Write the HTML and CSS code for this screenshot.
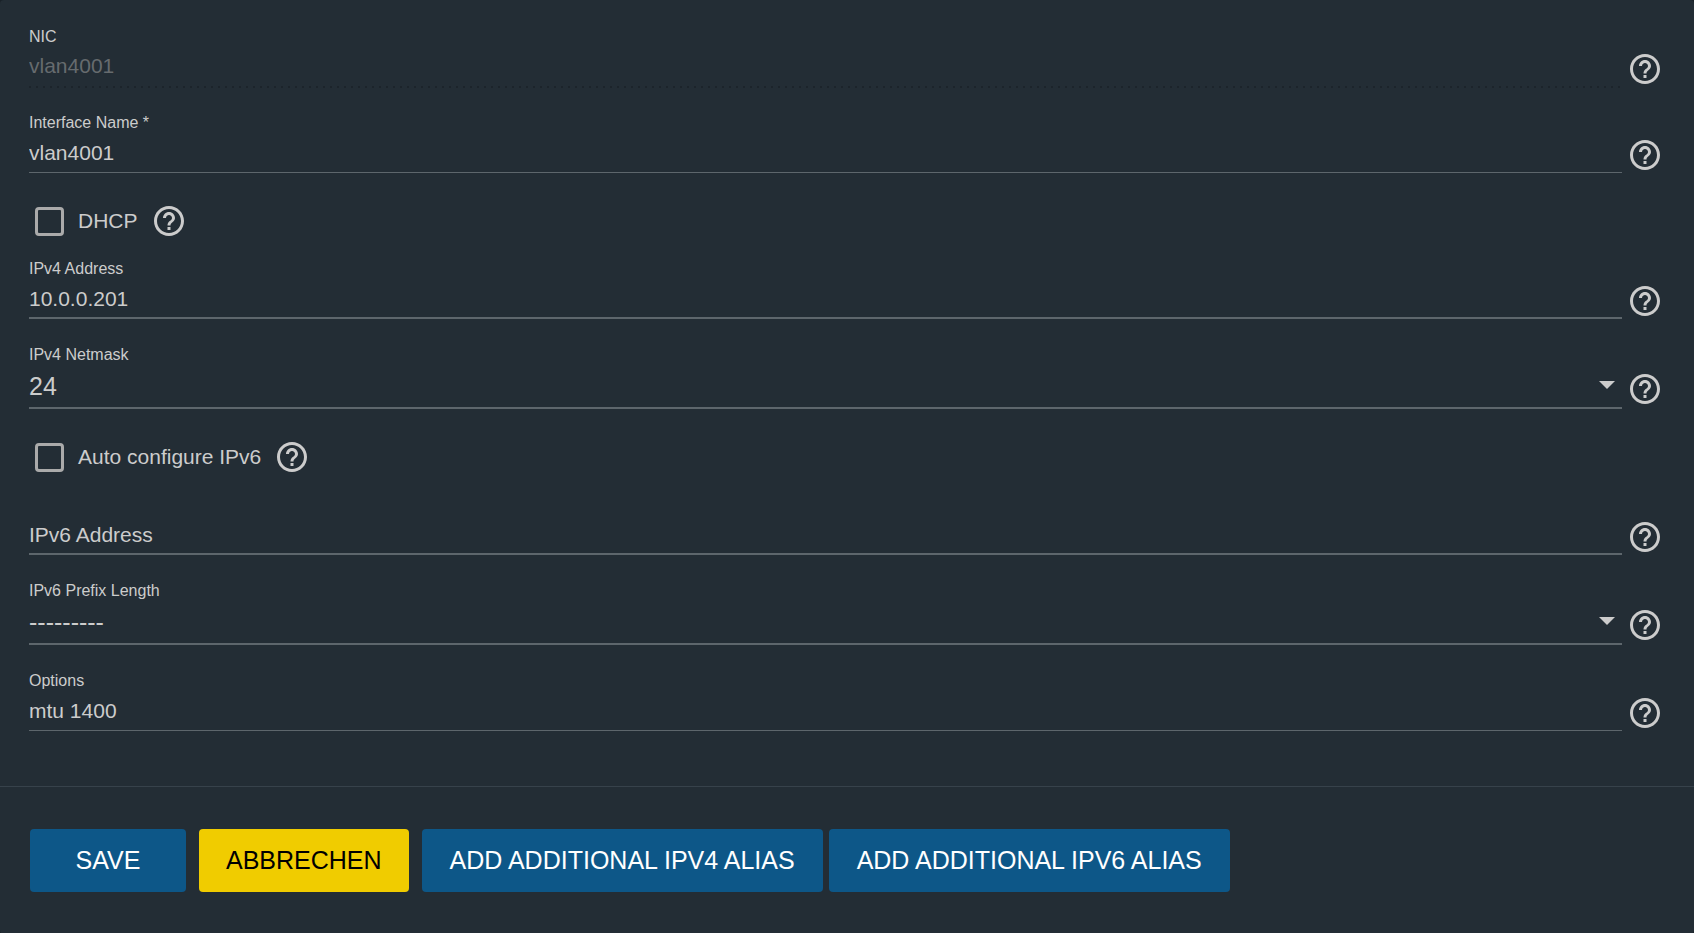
FILE: index.html
```html
<!DOCTYPE html>
<html lang="en">
<head>
    <meta charset="UTF-8">
    <meta name="viewport" content="width=device-width, initial-scale=1.0">
    <title>Interface</title>
    <link rel="stylesheet" href="styles.css">
</head>
<body>
    <!-- help icon, reused by every field -->
    <svg class="sprite" aria-hidden="true">
        <symbol id="help" viewBox="0 0 24 24">
            <path d="M11 18h2v-2h-2v2zm1-16C6.48 2 2 6.48 2 12s4.480 10 10 10 10-4.480 10-10S17.520 2 12 2zm0 18c-4.410 0-8-3.590-8-8s3.590-8 8-8 8 3.590 8 8-3.590 8-8 8zm0-14c-2.210 0-4 1.790-4 4h2c0-1.100.9-2 2-2s2 .9 2 2c0 2-3 1.750-3 5h2c0-2.250 3-2.500 3-5 0-2.210-1.790-4-4-4z"/>
        </symbol>
    </svg>

    <form class="card">
        <div class="fields">
            <div class="row">
                <div class="field">
                    <label for="nic">NIC</label>
                    <input type="text" id="nic" value="vlan4001" disabled>
                </div>
                <button type="button" class="help" aria-label="Help"><svg><use href="#help"/></svg></button>
            </div>

            <div class="row">
                <div class="field">
                    <label for="name">Interface Name *</label>
                    <input type="text" id="name" class="thin" value="vlan4001">
                </div>
                <button type="button" class="help" aria-label="Help"><svg><use href="#help"/></svg></button>
            </div>

            <div class="check-row">
                <input type="checkbox" id="dhcp">
                <label for="dhcp">DHCP</label>
                <button type="button" class="help" aria-label="Help"><svg><use href="#help"/></svg></button>
            </div>

            <div class="row">
                <div class="field">
                    <label for="ipv4">IPv4 Address</label>
                    <input type="text" id="ipv4" value="10.0.0.201">
                </div>
                <button type="button" class="help" aria-label="Help"><svg><use href="#help"/></svg></button>
            </div>

            <div class="row select-row">
                <div class="field">
                    <label for="netmask">IPv4 Netmask</label>
                    <div class="select">
                        <select id="netmask">
                            <option>24</option>
                        </select>
                    </div>
                </div>
                <button type="button" class="help" aria-label="Help"><svg><use href="#help"/></svg></button>
            </div>

            <div class="check-row">
                <input type="checkbox" id="ipv6auto">
                <label for="ipv6auto">Auto configure IPv6</label>
                <button type="button" class="help" aria-label="Help"><svg><use href="#help"/></svg></button>
            </div>

            <div class="row">
                <div class="field no-label">
                    <input type="text" id="ipv6" placeholder="IPv6 Address" aria-label="IPv6 Address">
                </div>
                <button type="button" class="help" aria-label="Help"><svg><use href="#help"/></svg></button>
            </div>

            <div class="row select-row">
                <div class="field">
                    <label for="prefix">IPv6 Prefix Length</label>
                    <div class="select">
                        <select id="prefix">
                            <option>---------</option>
                        </select>
                    </div>
                </div>
                <button type="button" class="help" aria-label="Help"><svg><use href="#help"/></svg></button>
            </div>

            <div class="row">
                <div class="field">
                    <label for="options">Options</label>
                    <input type="text" id="options" class="thin" value="mtu 1400">
                </div>
                <button type="button" class="help" aria-label="Help"><svg><use href="#help"/></svg></button>
            </div>
        </div>

        <div class="actions">
            <button type="submit" class="btn">SAVE</button>
            <button type="button" class="btn btn-cancel">ABBRECHEN</button>
            <div class="alias-buttons">
                <button type="button" class="btn">ADD ADDITIONAL IPV4 ALIAS</button>
                <button type="button" class="btn">ADD ADDITIONAL IPV6 ALIAS</button>
            </div>
        </div>
    </form>
</body>
</html>
```
FILE: styles.css
```css
* {
    box-sizing: border-box;
}

body {
    margin: 0;
    background-color: #192128;
    color: #cccccc;
    font-family: "Liberation Sans", Arial, sans-serif;
    font-size: 21px;
}

input, select, button {
    font-family: inherit;
    color: inherit;
}

.sprite {
    display: none;
}

.card {
    min-height: 100vh;
    background-color: #232d35;
    border-radius: 4px;
}

.fields {
    padding: 28px 31px 28px 29px;
}

.row {
    display: flex;
    align-items: flex-end;
    gap: 5px;
    margin-bottom: 27px;
}

.field {
    flex: 1;
}

.field label {
    display: block;
    font-size: 16px;
    line-height: 18px;
}

.no-label {
    padding-top: 18px;
}

input[type="text"] {
    display: block;
    width: 100%;
    height: 41px;
    padding: 2px 0 0;
    border: none;
    border-bottom: 2px solid #5d666c;
    background: none;
    font-size: 21px;
    outline: none;
}

input[type="text"].thin {
    border-bottom-width: 1px;
}

input[type="text"]::placeholder {
    color: #cccccc;
    opacity: 1;
}

/* dotted underline for the locked field */
input[type="text"]:disabled {
    height: 42px;
    margin-bottom: -1px;
    padding: 0 0 2px;
    border-bottom: none;
    color: #666b6e;
    background: linear-gradient(to right, #1c242b 2px, transparent 2px) left bottom / 7px 2px repeat-x;
}

.select {
    position: relative;
}

.select::after {
    content: "";
    position: absolute;
    top: 17px;
    right: 7px;
    border: 8px solid transparent;
    border-top-color: #cccccc;
    border-bottom: none;
    pointer-events: none;
}

select {
    display: block;
    width: 100%;
    height: 45px;
    padding: 0;
    border: none;
    border-bottom: 2px solid #5d666c;
    border-radius: 0;
    background: none;
    font-size: 25px;
    appearance: none;
    outline: none;
}

select option {
    background-color: #232d35;
}

.help {
    width: 36px;
    height: 36px;
    padding: 0;
    border: none;
    background: none;
    cursor: pointer;
}

.help svg {
    display: block;
    width: 36px;
    height: 36px;
    fill: #cccccc;
}

.select-row .help {
    margin-bottom: 2px;
}

.check-row {
    display: flex;
    align-items: center;
    height: 42px;
    margin-bottom: 18px;
    padding-left: 6px;
}

input[type="checkbox"] {
    width: 29px;
    height: 29px;
    margin: 0 14px 0 0;
    border: 3px solid #aaaaaa;
    border-radius: 4px;
    appearance: none;
}

input[type="checkbox"]:checked {
    background-color: #0d5788;
}

.check-row label {
    margin-right: 13px;
}

.actions {
    display: flex;
    flex-wrap: wrap;
    gap: 13px;
    padding: 42px 30px;
    border-top: 1px solid #37424b;
}

.alias-buttons {
    display: flex;
    flex-wrap: wrap;
    gap: 6px;
}

.btn {
    min-width: 156px;
    height: 63px;
    padding: 0 27px;
    border: none;
    border-radius: 4px;
    background-color: #0d5788;
    color: #ffffff;
    font-size: 25px;
    cursor: pointer;
}

.alias-buttons .btn {
    padding: 0 28px;
}

.btn-cancel {
    background-color: #f0cc00;
    color: #000000;
}
```
